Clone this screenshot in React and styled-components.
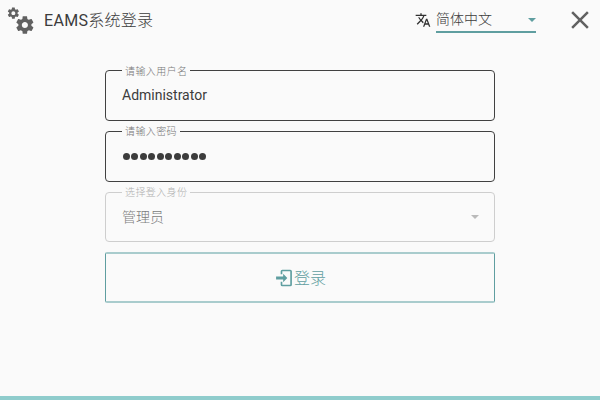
import React from "react";
import styled, { createGlobalStyle } from "styled-components";
import { MdTranslate, MdClose } from "react-icons/md";

const GlobalStyle = createGlobalStyle`
  * { box-sizing: border-box; }
  body { margin: 0; background: #fafafa; }
`;

const Window = styled.div`
  width: 600px;
  height: 400px;
  display: flex;
  flex-direction: column;
  background: #fafafa;
  border-bottom: 4px solid #8fcccc;
  color: #3c3c3c;
  font-family: Roboto, "Noto Sans CJK SC", sans-serif;
  overflow: hidden;
`;

const Header = styled.header`
  height: 40px;
  display: flex;
  align-items: center;
  padding: 0 5px;
`;

const Cogs = styled.svg`
  width: 30px;
  height: 30px;
  fill: #616161;
`;

const Title = styled.h1`
  flex: 1;
  margin: 0 0 0 9px;
  font-size: 16px;
  font-weight: 400;
  line-height: 24px;
  letter-spacing: 0.3px;
`;

const Light = styled.span`
  font-family: "Noto Sans CJK SC Light", "Noto Sans CJK SC", sans-serif;
  font-weight: 300;
  padding-bottom: ${(p) => p.$lift || 0}px;
`;

const TranslateIcon = styled(MdTranslate)`
  width: 16px;
  height: 16px;
  margin-right: 5px;
  color: #303030;
`;

const Language = styled.div`
  width: 100px;
  height: 26px;
  margin-right: 29px;
  display: flex;
  align-items: center;
  justify-content: space-between;
  border-bottom: 2px solid #5f9ea0;
  font-size: 14px;
  line-height: 24px;
`;

const Arrow = styled.span`
  margin-top: ${(p) => p.$drop || 0}px;
  border: 4px solid transparent;
  border-top-color: ${(p) => p.$color};
  border-bottom: 0;
`;

const CloseIcon = styled(MdClose)`
  width: 30px;
  height: 30px;
  color: #616161;
`;

const Form = styled.main`
  width: 390px;
  margin: 24px auto 0;
  display: flex;
  flex-direction: column;
`;

const Field = styled.fieldset`
  height: ${(p) => (p.$disabled ? 56 : 57)}px;
  min-width: 0;
  margin: 0 0 4px;
  padding: 0 15px 0 16px;
  border: 1px solid ${(p) => (p.$disabled ? "#cecece" : "#414141")};
  border-radius: 4px;
  color: ${(p) => (p.$disabled ? "#7c7c7c" : "#3c3c3c")};
`;

const Legend = styled.legend`
  height: 13px;
  padding: 0 3px;
  color: ${(p) => (p.$disabled ? "#b0b0b0" : "#787878")};
  font-size: 10px;
  line-height: ${(p) => p.$line || 13}px;
  letter-spacing: 0.4px;
`;

const Value = styled.div`
  height: ${(p) => p.$height || 37}px;
  display: flex;
  align-items: center;
  justify-content: space-between;
  font-size: 14px;
`;

const Dots = styled.div`
  display: flex;
  gap: 1.5px;
  margin-left: 0.5px;
`;

const Dot = styled.i`
  width: 7px;
  height: 7px;
  border-radius: 50%;
  background: #3c3c3c;
`;

const LoginButton = styled.button`
  height: 51px;
  display: flex;
  align-items: center;
  justify-content: center;
  margin-top: 6px;
  padding: 0;
  background: transparent;
  border: solid #5f9ea0;
  border-width: 2px 1px;
  border-top-color: #a9cccd;
  border-bottom-color: #a9cccd;
  border-radius: 2px;
  color: #5f9ea0;
  font: 16px/24px Roboto, "Noto Sans CJK SC", sans-serif;
`;

const LoginIcon = styled.svg`
  width: 20px;
  height: 20px;
  fill: currentColor;
`;

export default function App() {
  return (
    <Window>
      <GlobalStyle />
      <Header>
        <Cogs viewBox="0 0 24 24">
          <path d="M15.9,18.45C17.25,18.45 18.35,17.35 18.35,16C18.35,14.65 17.25,13.55 15.9,13.55C14.54,13.55 13.45,14.65 13.45,16C13.45,17.35 14.54,18.45 15.9,18.45M21.1,16.68L22.58,17.84C22.71,17.95 22.75,18.13 22.66,18.29L21.26,20.71C21.17,20.86 21,20.92 20.83,20.86L19.09,20.16C18.73,20.44 18.33,20.67 17.91,20.85L17.64,22.7C17.62,22.87 17.47,23 17.3,23H14.5C14.32,23 14.18,22.87 14.15,22.7L13.89,20.85C13.46,20.67 13.07,20.44 12.71,20.16L10.96,20.86C10.81,20.92 10.62,20.86 10.54,20.71L9.14,18.29C9.05,18.13 9.09,17.95 9.22,17.84L10.7,16.68L10.65,16L10.7,15.31L9.22,14.16C9.09,14.05 9.05,13.86 9.14,13.71L10.54,11.29C10.62,11.13 10.81,11.07 10.96,11.13L12.71,11.84C13.07,11.56 13.46,11.32 13.89,11.15L14.15,9.29C14.18,9.13 14.32,9 14.5,9H17.3C17.47,9 17.62,9.13 17.64,9.29L17.91,11.15C18.33,11.32 18.73,11.56 19.09,11.84L20.83,11.13C21,11.07 21.17,11.13 21.26,11.29L22.66,13.71C22.75,13.86 22.71,14.05 22.58,14.16L21.1,15.31L21.15,16L21.1,16.68M6.69,8.07C7.56,8.07 8.26,7.37 8.26,6.5C8.26,5.63 7.56,4.92 6.69,4.92A1.58,1.58 0 0,0 5.11,6.5C5.11,7.37 5.82,8.07 6.69,8.07M10.03,6.94L11,7.68C11.07,7.75 11.09,7.87 11.03,7.97L10.13,9.53C10.08,9.63 9.96,9.67 9.86,9.63L8.74,9.18L8,9.62L7.81,10.81C7.79,10.92 7.7,11 7.59,11H5.79C5.67,11 5.58,10.92 5.56,10.81L5.4,9.62L4.64,9.18L3.5,9.63C3.41,9.67 3.3,9.63 3.24,9.53L2.34,7.97C2.28,7.87 2.31,7.75 2.39,7.68L3.34,6.94L3.31,6.5L3.34,6.06L2.39,5.32C2.31,5.25 2.28,5.13 2.34,5.03L3.24,3.47C3.3,3.37 3.41,3.33 3.5,3.37L4.63,3.82L5.4,3.38L5.56,2.19C5.58,2.08 5.67,2 5.79,2H7.59C7.7,2 7.79,2.08 7.81,2.19L8,3.38L8.74,3.82L9.86,3.37C9.96,3.33 10.08,3.37 10.13,3.47L11.03,5.03C11.09,5.13 11.07,5.25 11,5.32L10.03,6.06L10.06,6.5L10.03,6.94Z" />
        </Cogs>
        <Title>
          EAMS<Light>系统登录</Light>
        </Title>
        <TranslateIcon />
        <Language>
          <Light $lift={2}>简体中文</Light>
          <Arrow $color="#5f9ea0" $drop={2} />
        </Language>
        <CloseIcon />
      </Header>
      <Form>
        <Field>
          <Legend>
            <Light>请输入用户名</Light>
          </Legend>
          <Value $height={36}>Administrator</Value>
        </Field>
        <Field>
          <Legend $line={11}>
            <Light>请输入密码</Light>
          </Legend>
          <Value>
            <Dots>
              {Array.from({ length: 10 }, (_, i) => (
                <Dot key={i} />
              ))}
            </Dots>
          </Value>
        </Field>
        <Field $disabled>
          <Legend $disabled $line={11}>
            <Light>选择登入身份</Light>
          </Legend>
          <Value $height={35}>
            <Light $lift={2}>管理员</Light>
            <Arrow $color="#bababa" />
          </Value>
        </Field>
        <LoginButton>
          <LoginIcon viewBox="0 0 24 24">
            <path d="M11,17V13.9H2.5V10.1H11V7L16,12L11,17M10,2H19.5A2,2 0 0,1 21.5,4V20A2,2 0 0,1 19.5,22H10A2,2 0 0,1 8,20V16.5H10V20H19.5V4H10V7.5H8V4A2,2 0 0,1 10,2Z" />
          </LoginIcon>
          <Light $lift={2}>登录</Light>
        </LoginButton>
      </Form>
    </Window>
  );
}
